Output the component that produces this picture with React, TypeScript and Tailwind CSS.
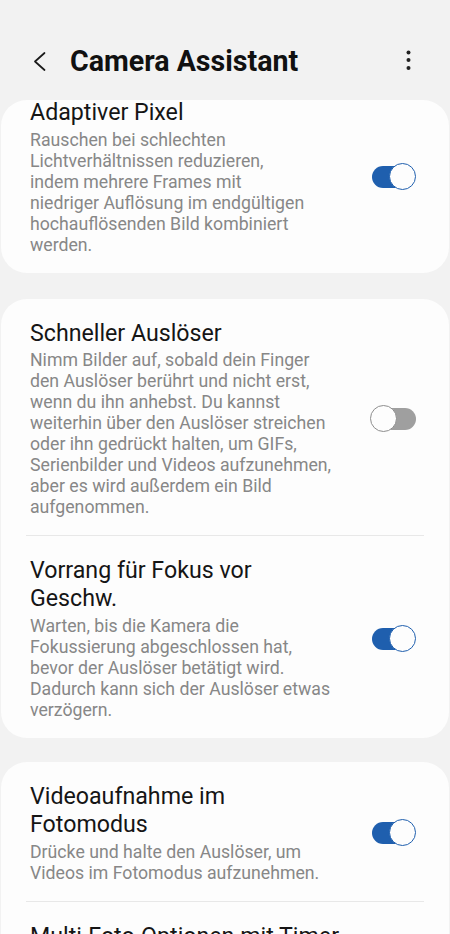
import React from "react";

type Item = {
  title: string[];
  desc: string[];
  on: boolean;
};

function Toggle({ on }: { on: boolean }) {
  return (
    <div className="relative w-[46px] h-[27px] shrink-0">
      <div
        className={
          on
            ? "absolute left-[2px] right-[4px] top-[3px] bottom-[2px] rounded-full bg-[#1f5fae]"
            : "absolute left-[6px] right-0 top-[3px] bottom-[2px] rounded-full bg-[#9f9f9f]"
        }
      />
      <div
        className={
          on
            ? "absolute right-0 top-0 w-[27px] h-[27px] rounded-full bg-[#fdfdfd] border-[1.5px] border-[#1f5fae]"
            : "absolute left-0 top-0 w-[27px] h-[27px] rounded-full bg-[#fdfdfd] border-[1.5px] border-[#8e8e8e]"
        }
      />
    </div>
  );
}

function Row({ item, className = "" }: { item: Item; className?: string }) {
  return (
    <div className={"flex items-center pl-[29px] pr-[33px] pt-[20px] pb-[17px] " + className}>
      <div className="flex-1 flex flex-col gap-[3.5px]">
        <div className="text-[23.2px] leading-[28px] text-[#151515]">
          {item.title.map((l, i) => (
            <span key={i} className="block whitespace-nowrap">
              {l}
            </span>
          ))}
        </div>
        <div className="text-[17.7px] leading-[21px] text-[#878787]">
          {item.desc.map((l, i) => (
            <span key={i} className="block whitespace-nowrap">
              {l}
            </span>
          ))}
        </div>
      </div>
      <Toggle on={item.on} />
    </div>
  );
}

function Divider() {
  return <div className="mx-[25px] h-px bg-[#e8e8e8]" />;
}

export default function App() {
  const adaptive: Item = {
    title: ["Adaptiver Pixel"],
    desc: [
      "Rauschen bei schlechten",
      "Lichtverhältnissen reduzieren,",
      "indem mehrere Frames mit",
      "niedriger Auflösung im endgültigen",
      "hochauflösenden Bild kombiniert",
      "werden.",
    ],
    on: true,
  };
  const schnell: Item = {
    title: ["Schneller Auslöser"],
    desc: [
      "Nimm Bilder auf, sobald dein Finger",
      "den Auslöser berührt und nicht erst,",
      "wenn du ihn anhebst. Du kannst",
      "weiterhin über den Auslöser streichen",
      "oder ihn gedrückt halten, um GIFs,",
      "Serienbilder und Videos aufzunehmen,",
      "aber es wird außerdem ein Bild",
      "aufgenommen.",
    ],
    on: false,
  };
  const vorrang: Item = {
    title: ["Vorrang für Fokus vor", "Geschw."],
    desc: [
      "Warten, bis die Kamera die",
      "Fokussierung abgeschlossen hat,",
      "bevor der Auslöser betätigt wird.",
      "Dadurch kann sich der Auslöser etwas",
      "verzögern.",
    ],
    on: true,
  };
  const video: Item = {
    title: ["Videoaufnahme im", "Fotomodus"],
    desc: ["Drücke und halte den Auslöser, um", "Videos im Fotomodus aufzunehmen."],
    on: true,
  };
  const multi: Item = {
    title: ["Multi-Foto-Optionen mit Timer"],
    desc: ["Wähle aus, wie viele Fotos", "aufgenommen werden sollen."],
    on: false,
  };

  return (
    <div
      className="w-[450px] h-[934px] overflow-hidden bg-[#f2f2f2]"
      style={{ fontFamily: "Roboto, 'Noto Sans', sans-serif" }}
    >
      {/* Header */}
      <div className="h-[100px] pt-[42px]">
        <div className="h-[38px] flex items-center pl-[33px] pr-[39px]">
          <svg width="13" height="19" viewBox="0 0 13 19" fill="none" className="shrink-0">
            <path d="M11.5 1 L2 9.5 L11.5 18" stroke="#1a1a1a" strokeWidth="1.7" strokeLinecap="round" strokeLinejoin="round" />
          </svg>
          <div className="ml-[24px] flex-1 text-[28.6px] font-bold text-[#111111] leading-[38px] whitespace-nowrap">
            Camera Assistant
          </div>
          <svg width="5" height="22" viewBox="0 0 5 22" className="shrink-0">
            <circle cx="2.5" cy="2.5" r="2" fill="#222" />
            <circle cx="2.5" cy="10" r="2" fill="#222" />
            <circle cx="2.5" cy="18" r="2" fill="#222" />
          </svg>
        </div>
      </div>

      {/* Card 1 (scrolled) */}
      <div className="mx-px rounded-[26px] bg-[#fdfdfd] overflow-hidden">
        <Row item={adaptive} className="-mt-[22px]" />
      </div>

      {/* Card 2 */}
      <div className="mx-px mt-[26px] rounded-[26px] bg-[#fdfdfd] overflow-hidden">
        <Row item={schnell} />
        <Divider />
        <Row item={vorrang} />
      </div>

      {/* Card 3 */}
      <div className="mx-px mt-[24.5px] rounded-[26px] bg-[#fdfdfd] overflow-hidden">
        <Row item={video} />
        <Divider />
        <Row item={multi} />
      </div>
    </div>
  );
}
